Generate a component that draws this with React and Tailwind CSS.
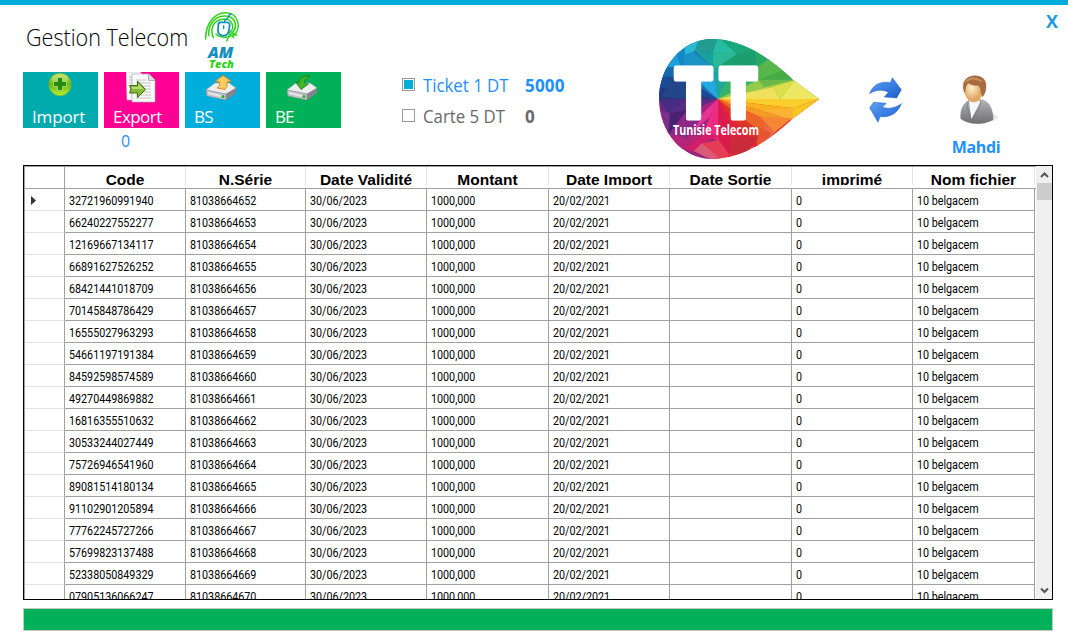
import React from "react";

const codes = [
  "32721960991940", "66240227552277", "12169667134117", "66891627526252",
  "68421441018709", "70145848786429", "16555027963293", "54661197191384",
  "84592598574589", "49270449869882", "16816355510632", "30533244027449",
  "75726946541960", "89081514180134", "91102901205894", "77762245727266",
  "57699823137488", "52338050849329", "07905136066247",
];

const headers = [
  "Code",
  "N.Série",
  "Date Validité",
  "Montant",
  "Date Import",
  "Date Sortie",
  "imprimé",
  "Nom fichier",
];

const GRID = "grid grid-cols-[41px_121px_120px_121px_122px_121px_122px_121px_122px]";

function AmLogo() {
  return (
    <svg className="h-[60px] w-[40px]" viewBox="0 0 120 180" fill="none">
      <g stroke="#2ed318" strokeWidth="4.5" strokeLinecap="round">
        <path d="M5 84C4 42 28 6 64 5C104 4 116 54 86 76L89 80" />
        <path d="M14 74C12 44 29 16 61 15C98 14 106 54 76 72L68 90" />
        <path d="M28 80C18 56 25 29 56 25C86 21 96 52 74 66" />
        <path d="M36 69C52 84 80 80 89 67L98 73" />
      </g>
      <path d="M43 40Q44 33 54 34L69 34Q78 35 77 43L75 58Q72 74 58 74Q43 73 42 60Z" fill="#fff" stroke="#168fc0" strokeWidth="5.5" />
      <path d="M61 34C60 22 72 26 74 17C75 10 79 8 83 10M59 43V54" stroke="#168fc0" strokeWidth="4" />
      <text x="12" y="141" fontFamily="Open Sans, sans-serif" fontWeight="800" fontStyle="italic" fontSize="49" fill="#168fc0" textLength="76" lengthAdjust="spacingAndGlyphs">AM</text>
      <text x="15" y="170" fontFamily="Open Sans, sans-serif" fontWeight="800" fontStyle="italic" fontSize="33" fill="#2ed318" textLength="75" lengthAdjust="spacingAndGlyphs">Tech</text>
    </svg>
  );
}

function PlusIcon() {
  return (
    <svg className="h-6 w-6" viewBox="0 0 24 24">
      <defs>
        <linearGradient id="ball" x1="0" y1="0" x2="0" y2="1">
          <stop offset="0" stopColor="#b5dc3a" />
          <stop offset=".5" stopColor="#69b81b" />
          <stop offset="1" stopColor="#b9ee35" />
        </linearGradient>
      </defs>
      <circle cx="12" cy="12.5" r="11.2" fill="url(#ball)" stroke="#78b51e" strokeWidth=".6" />
      <ellipse cx="12" cy="7" rx="8.5" ry="5" fill="#fff" opacity=".28" />
      <path d="M9.5 5.5h5v4h4v5h-4v4h-5v-4h-4v-5h4z" fill="#258b12" stroke="#b9e36b" strokeWidth=".8" />
    </svg>
  );
}

function ExportIcon() {
  return (
    <svg className="h-[31px] w-[30px]" viewBox="0 0 30 31">
      <path d="M0 0h14l3 3v25H1z" fill="#fbfbfb" stroke="#bbb" strokeWidth=".6" />
      <path d="M3 5h10M3 8h8M3 11h8M3 14h8" stroke="#aaa" strokeWidth=".8" />
      <path d="M6 2h17l6 6v22H6z" fill="#fafafa" stroke="#aaa" strokeWidth=".7" />
      <path d="M22.5 2v6.5H29" fill="#ddd" stroke="#999" strokeWidth=".7" />
      <path d="M10 8h10M10 11h15M12 14h13M15 17h10M15 20h10M10 23h15M10 26h15" stroke="#b5b5b5" strokeWidth=".8" />
      <path d="M3.5 13.5h8V9L19.5 17.5L11.5 25.5V21h-8L5 17z" fill="#86bb38" stroke="#3e6d13" />
      <path d="M5.5 15h7v-3l5 5h-11z" fill="#c6e48b" opacity=".8" />
    </svg>
  );
}

function Drive({ children }) {
  return (
    <svg className="h-[27px] w-[33px]" viewBox="0 0 33 27">
      <path d="M1 16L10 9H24L32 14L22 25L2 21Z" fill="#777" opacity=".5" />
      <path d="M1 15L10 8H24L31 13L21 19Z" fill="#eeeef1" stroke="#aaa" strokeWidth=".5" />
      <path d="M1 15L21 19V25L2 21Z" fill="#c3c3ca" stroke="#8c8c94" strokeWidth=".5" />
      <path d="M21 19L31 13V18L21 25Z" fill="#85858e" />
      <path d="M3 17L16 20V22L3 19Z" fill="#e5e5e8" />
      <circle cx="18" cy="21.7" r="1.4" fill="#13b21f" />
      {children}
    </svg>
  );
}

function UpArrow() {
  return <path d="M18 0.5L26 6L22 7Q23 12 20 14.5L12 13Q16 11 14.5 7L10.5 6Z" fill="#ffcc62" stroke="#dc8712" strokeWidth=".9" />;
}

function DownArrow() {
  return <path d="M24 1C18 0 13 3 13 8L9.5 7L15 14.5L22.5 9L18.5 8.5C18 5 20 3 24 1Z" fill="#43b529" stroke="#1c7c12" strokeWidth=".8" />;
}

function Tile({ color, label, pad, icon, iconPad }) {
  return (
    <button className={`flex h-14 w-[75px] flex-col text-left ${color}`}>
      <span className={`flex h-[33px] shrink-0 ${iconPad}`}>{icon}</span>
      <span className={`block whitespace-nowrap pl-[9px] font-['Open_Sans',sans-serif] text-[17px] leading-[23px] text-white ${pad}`}>{label}</span>
    </button>
  );
}

const facets = [
  ["203,207 27,207 27,170 75,180", "#233a80"],
  ["203,207 75,180 20,170 20,110 68,118 140,165", "#1b4a94"],
  ["35,200 75,135 130,190 110,207", "#23458a"],
  ["20,140 60,90 90,110 72,140", "#1668b2"],
  ["50,110 90,50 110,70 100,115", "#1e9fda"],
  ["75,65 125,30 130,75 95,115", "#1687c8"],
  ["105,40 150,20 135,62 105,75", "#28b9d5"],
  ["130,65 190,115 160,120 100,110 105,75", "#1c93c5"],
  ["203,207 152,160 155,115 190,110", "#22a9df"],
  ["203,207 190,110 205,100 250,110", "#20a79b"],
  ["135,62 150,20 203,20 188,70", "#229b91"],
  ["135,62 188,70 190,115", "#17a39c"],
  ["203,20 260,72 188,70", "#25bda2"],
  ["188,70 260,72 205,110 190,115", "#29b89b"],
  ["203,20 280,20 310,55 260,72", "#1aa77b"],
  ["260,72 310,55 325,60 320,105 205,110", "#1c9f70"],
  ["310,40 380,80 340,105 320,105", "#27a864"],
  ["203,207 250,110 330,105 325,150", "#35b36d"],
  ["325,110 370,75 400,125 325,150", "#58b64a"],
  ["370,75 440,145 325,150 400,120", "#47aa43"],
  ["203,207 325,150 435,150", "#93c94c"],
  ["325,150 435,150 345,175", "#6cb849"],
  ["203,207 435,150 370,175", "#b4d147"],
  ["203,207 370,172 390,207", "#f0e05e"],
  ["370,172 435,150 390,207", "#dce04b"],
  ["435,150 508,207 390,207", "#eee763"],
  ["203,207 508,207 430,235", "#fbce2d"],
  ["203,207 430,235 430,265 330,240", "#f9b21f"],
  ["508,207 425,270 430,235", "#f6c71f"],
  ["203,207 330,240 425,270 330,260", "#f59a25"],
  ["330,240 430,235 425,270", "#fab332"],
  ["203,207 330,260 365,310 290,300", "#ed6329"],
  ["330,260 425,265 370,310", "#f48635"],
  ["345,275 375,308 320,350", "#e86942"],
  ["203,207 325,300 320,355 240,280", "#dc3426"],
  ["325,290 365,310 320,350", "#e95430"],
  ["203,207 285,310 325,350 240,340", "#e4233a"],
  ["240,320 325,320 290,370 240,375", "#c92b3b"],
  ["203,207 240,280 240,390 205,330", "#d91b4e"],
  ["203,207 205,330 155,320 180,260", "#ed2b80"],
  ["203,207 180,260 110,320 152,255", "#e63395"],
  ["205,330 240,375 200,390 155,340", "#e63c55"],
  ["155,340 205,380 190,392 105,350", "#d95b77"],
  ["155,340 205,320 160,300 100,355 130,365", "#d31d68"],
  ["60,320 160,315 105,355 90,360", "#b52477"],
  ["203,207 152,255 110,320 105,250", "#a62180"],
  ["110,240 150,270 110,330 70,300", "#8b2784"],
  ["203,207 105,250 45,280 27,207", "#592b82"],
  ["27,207 110,207 60,250", "#482c83"],
  ["35,240 60,250 55,315", "#79318c"],
  ["60,250 110,240 55,315", "#4a2073"],
];

function TunisieLogo() {
  return (
    <svg className="h-[136px] w-[180px]" viewBox="0 0 540 408">
      <defs>
        <clipPath id="drop">
          <path d="M508 207L430 150Q300 27 187 27C95 27 27 112 27 207C27 304 95 387 187 387Q300 387 430 265Z" />
        </clipPath>
      </defs>
      <g clipPath="url(#drop)">
        <path d="M0 0H203V207H0Z" fill="#1b74b6" />
        <path d="M203 0H540V207H203Z" fill="#48af58" />
        <path d="M203 207H540V408H203Z" fill="#e63e34" />
        <path d="M0 207H203V408H0Z" fill="#97267f" />
        {facets.map(([points, fill], i) => (
          <polygon key={i} points={points} fill={fill} />
        ))}
      </g>
      <g fill="#fff" stroke="#fff" strokeLinejoin="round" strokeWidth="15" fontFamily="Inter, sans-serif" fontWeight="900" fontSize="208">
        <text x="73" y="264" textLength="116" lengthAdjust="spacingAndGlyphs">T</text>
        <text x="207" y="264" textLength="116" lengthAdjust="spacingAndGlyphs">T</text>
      </g>
      <text x="69" y="315" fill="#fff" fontFamily="Open Sans, sans-serif" fontWeight="700" fontSize="40" textLength="258" lengthAdjust="spacingAndGlyphs">Tunisie Telecom</text>
    </svg>
  );
}

function RefreshIcon() {
  return (
    <svg className="h-[46px] w-[33px]" viewBox="0 0 99 138">
      <defs>
        <linearGradient id="blue" x1="0" y1="0" x2="1" y2="1">
          <stop offset="0" stopColor="#5fa0f2" />
          <stop offset=".6" stopColor="#3379df" />
          <stop offset="1" stopColor="#2459bd" />
        </linearGradient>
      </defs>
      <g fill="url(#blue)" stroke="#2860bf" strokeWidth="1.5">
        <path d="M2 50C12 20 38 12 64 17L70 2L97 38L83 63L46 60L58 46C42 36 18 38 2 50Z" />
        <path d="M97 80C86 110 62 122 33 119L27 136L2 92L14 76L52 79L40 90C58 98 82 92 97 80Z" />
      </g>
    </svg>
  );
}

function UserIcon() {
  return (
    <svg className="h-[50px] w-[42px]" viewBox="0 0 126 150">
      <defs>
        <linearGradient id="suit" x1="0" y1="0" x2="0" y2="1">
          <stop offset="0" stopColor="#b5b5b7" />
          <stop offset="1" stopColor="#6e6e70" />
        </linearGradient>
        <radialGradient id="face" cx=".4" cy=".35">
          <stop offset="0" stopColor="#fff0cf" />
          <stop offset="1" stopColor="#e2a765" />
        </radialGradient>
        <radialGradient id="shade">
          <stop offset="0" stopColor="#777" stopOpacity=".6" />
          <stop offset="1" stopColor="#999" stopOpacity="0" />
        </radialGradient>
      </defs>
      <ellipse cx="90" cy="129" rx="36" ry="15" fill="url(#shade)" />
      <path d="M8 134C6 108 16 86 34 79L72 77C94 83 106 106 105 138Q82 150 55 149Q25 147 8 134Z" fill="url(#suit)" stroke="#77777a" />
      <path d="M33 81L40 136L67 83L55 76Z" fill="#f7f8fb" />
      <path d="M31 81L27 98L39 135M68 82L66 99L42 137" fill="none" stroke="#777" strokeWidth="2" />
      <path d="M19 36C20 18 38 16 54 20C73 25 78 36 74 56C70 76 58 86 45 85C27 82 16 60 19 36Z" fill="url(#face)" />
      <path d="M18 52C10 25 24 9 43 6C65 2 86 14 84 36C84 52 80 60 74 68L69 54Q70 40 60 34Q42 36 31 27Q21 34 21 56Z" fill="#a86b3e" stroke="#885027" />
      <path d="M24 24C36 10 54 11 71 22" fill="none" stroke="#d39c69" strokeWidth="6" opacity=".7" />
    </svg>
  );
}

function Option({ checked, label, value, color }) {
  return (
    <div className={`flex h-[31px] items-center font-['Open_Sans',sans-serif] ${color}`}>
      <span className="mb-[3px] flex h-[13px] w-[13px] shrink-0 items-center justify-center border border-[#999] bg-white">
        {checked && <span className="h-[9px] w-[9px] bg-[#00aedb]" />}
      </span>
      <span className="ml-2 w-[102px] whitespace-nowrap text-[17.5px]">
        <span className="inline-block origin-left scale-x-[0.96]">{label}</span>
      </span>
      <span className="text-[17px] font-bold tracking-[0.2px]">{value}</span>
    </div>
  );
}

function Cell({ children }) {
  return (
    <div className="h-[22px] overflow-hidden whitespace-nowrap border-b border-r border-[#a0a0a0] pl-1 leading-[24px]">
      <span className="block origin-left scale-x-[0.895]">{children}</span>
    </div>
  );
}

export default function App() {
  return (
    <div className="flex h-[644px] w-[1068px] flex-col overflow-hidden border-t-[5px] border-[#00aedb] bg-white">
      <header className="flex h-[160px] shrink-0 pl-[23px]">
        <div className="w-[318px]">
          <div className="flex h-[67px] pl-[3px] pt-[6px]">
            <h1 className="w-[178px] origin-left scale-x-[0.937] whitespace-nowrap pt-[9px] font-['Open_Sans',sans-serif] text-[23px] font-light leading-[34px] text-black">Gestion Telecom</h1>
            <AmLogo />
          </div>
          <div className="flex gap-[6px]">
            <Tile color="bg-[#00aaad]" label="Import" icon={<PlusIcon />} iconPad="pl-[25px]" pad="tracking-[-0.15px]" />
            <Tile color="bg-[#ff0094]" label="Export" icon={<ExportIcon />} iconPad="pl-[22px]" pad="tracking-[-0.55px]" />
            <Tile color="bg-[#00aedb]" label="BS" icon={<Drive><UpArrow /></Drive>} iconPad="pl-5 pt-[3px]" pad="tracking-[-0.7px]" />
            <Tile color="bg-[#00b159]" label="BE" icon={<Drive><DownArrow /></Drive>} iconPad="pl-5 pt-[3px]" pad="tracking-[-0.9px]" />
          </div>
          <div className="pl-[98px] font-['Open_Sans',sans-serif] text-[16px] leading-[26px] text-[#1e90ff]">0</div>
        </div>
        <div className="ml-[61px] w-[248px] pt-[65px]">
          <Option checked label="Ticket 1 DT" value="5000" color="text-[#1e90ff]" />
          <Option label="Carte 5 DT" value="0" color="text-[#696969]" />
        </div>
        <div className="w-[180px] pt-[25px]">
          <TunisieLogo />
        </div>
        <div className="ml-[39px] w-[33px] pt-[72px]">
          <RefreshIcon />
        </div>
        <div className="ml-[35px] flex w-[78px] flex-col items-center pt-[69px]">
          <span className="ml-[5px]"><UserIcon /></span>
          <span className="mt-[10px] font-['Open_Sans',sans-serif] text-[16px] font-bold leading-[26px] tracking-[-0.35px] text-[#1e90ff]">Mahdi</span>
        </div>
        <button className="ml-[31px] mt-[4px] h-6 font-['Open_Sans',sans-serif] text-[18px] font-bold leading-6 text-[#1a9be0]">X</button>
      </header>

      <main className="ml-[23px] flex h-[435px] w-[1030px] shrink-0 border border-black">
        <div className="h-full w-[1012px] overflow-hidden border-l border-t border-[#a0a0a0] font-[Roboto,sans-serif] text-[12px] text-black">
          <div className={`${GRID} -ml-px h-[22px] border-b border-[#a0a0a0] font-['Liberation_Sans',sans-serif] text-[15.5px] font-bold`}>
            <div className="border-r border-[#a0a0a0]" />
            {headers.map((name) => (
              <div key={name} className="h-[18px] overflow-hidden whitespace-nowrap border-r border-[#e3e3e3] text-center leading-[25px]">{name}</div>
            ))}
          </div>
          {codes.map((code, i) => (
            <div key={code} className={`${GRID} -ml-px`}>
              <div className="flex h-[22px] items-center border-b border-r border-b-[#e3e3e3] border-r-[#a0a0a0] pl-[7px] pt-px">
                {i === 0 && <svg className="h-[9px] w-[5px]" viewBox="0 0 5 9"><path d="M0 0L5 4.5L0 9Z" fill="#333" /></svg>}
              </div>
              <Cell>{code}</Cell>
              <Cell>{81038664652 + i}</Cell>
              <Cell>30/06/2023</Cell>
              <Cell>1000,000</Cell>
              <Cell>20/02/2021</Cell>
              <Cell />
              <Cell>0</Cell>
              <Cell>10 belgacem</Cell>
            </div>
          ))}
        </div>
        <div className="flex w-[16px] flex-col items-center bg-[#f0f0f0]">
          <svg className="h-[17px] w-[15px] shrink-0" viewBox="0 0 15 17"><path d="M4 11L7.5 7.5L11 11" fill="none" stroke="#555" strokeWidth="2" /></svg>
          <div className="h-[17px] w-[15px] bg-[#cdcdcd]" />
          <svg className="mt-auto h-[17px] w-[15px]" viewBox="0 0 15 17"><path d="M4 6.5L7.5 10L11 6.5" fill="none" stroke="#555" strokeWidth="2" /></svg>
        </div>
      </main>

      <div className="ml-[23px] mt-2 h-[23px] w-[1030px] shrink-0 border border-[#c8c8c8] bg-[#00b159]" />
    </div>
  );
}
